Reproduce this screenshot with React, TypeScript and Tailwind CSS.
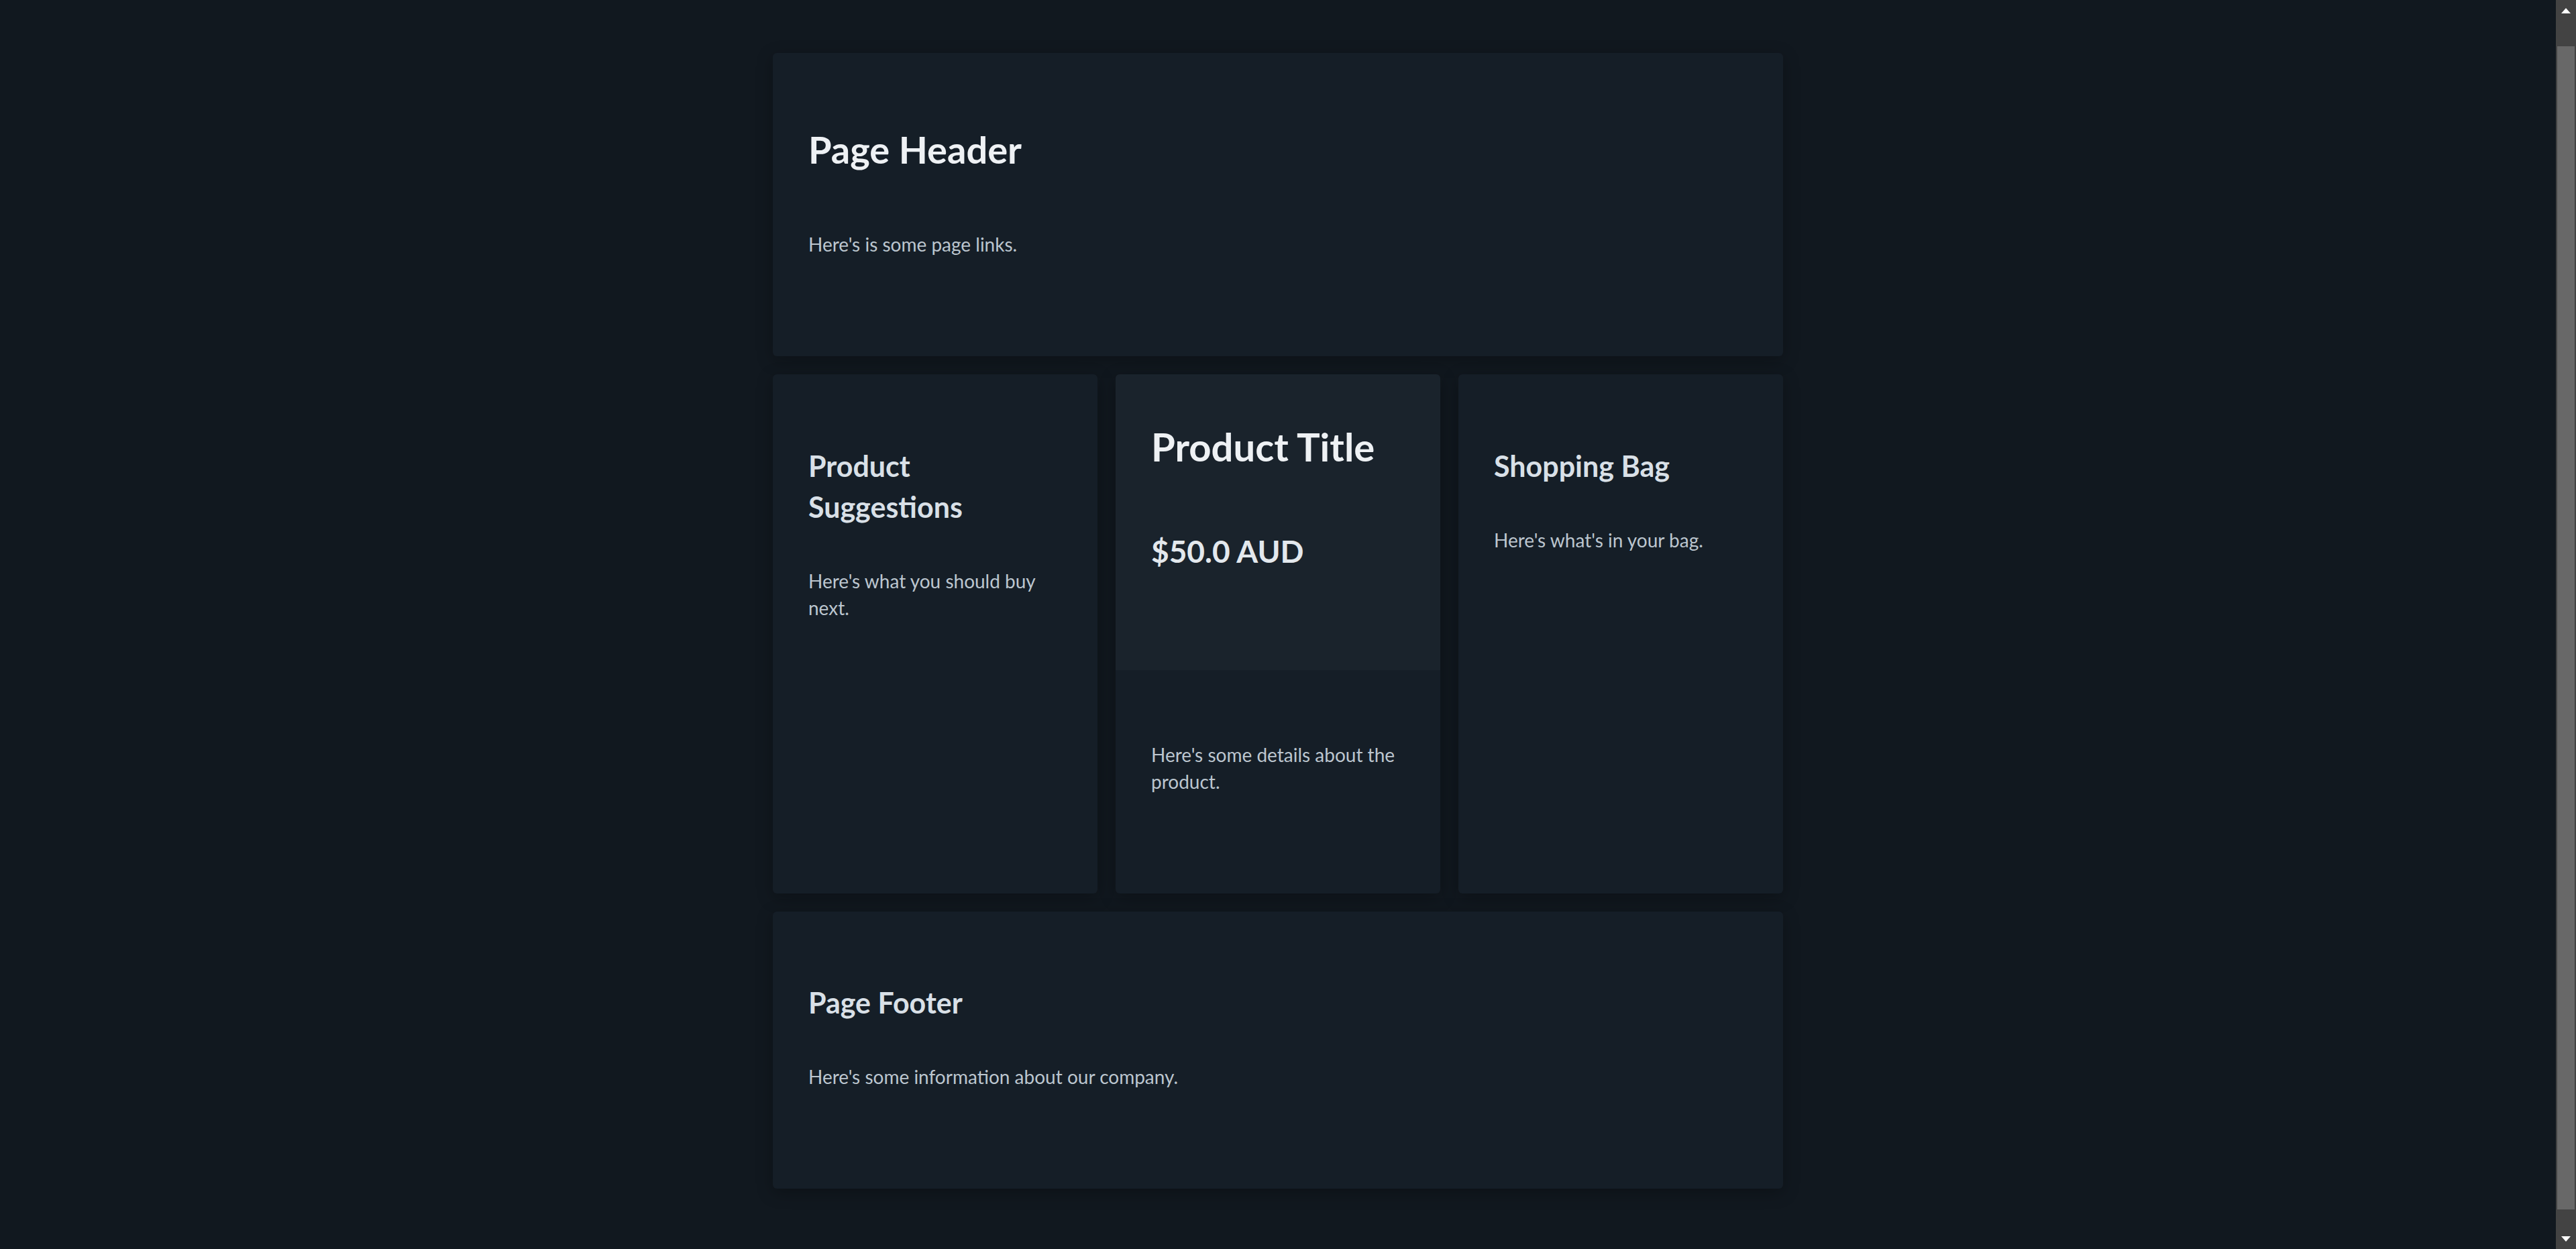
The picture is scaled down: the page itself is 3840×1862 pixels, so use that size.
import React from 'react';

// Tarjetas del layout de la página de producto
const cardClass = 'rounded-[6px] bg-[#151e27] shadow-[0_6px_24px_rgba(0,0,0,0.28)]';

const ScrollBar = () => (
  <div className="flex w-[30px] shrink-0 flex-col bg-[#434343]">
    <div className="flex h-[34px] items-center justify-center pb-[3px]">
      <svg width="14" height="8" viewBox="0 0 14 8">
        <polygon points="7,0 14,8 0,8" fill="#ffffff" />
      </svg>
    </div>
    <div className="flex-1 px-[2px] pt-[35px] pb-[25px]">
      <div className="h-full bg-[#686868]" />
    </div>
    <div className="flex h-[34px] items-center justify-center pt-[3px]">
      <svg width="14" height="8" viewBox="0 0 14 8">
        <polygon points="0,0 14,0 7,8" fill="#ffffff" />
      </svg>
    </div>
  </div>
);

const App = () => {
  return (
    <div className="flex h-screen overflow-hidden bg-[#11181f] font-['Lato','Open_Sans',sans-serif]">
      <main className="flex-1 overflow-hidden pt-[79px]">
        <div className="mx-auto flex w-[1506px] flex-col gap-[27px]">
          {/* Cabecera */}
          <header className={`${cardClass} h-[452px] px-[53px] pt-[112px]`}>
            <h1 className="text-[56px] font-bold leading-[64px] text-[#eef1f4]">Page Header</h1>
            <p className="mt-[92px] text-[28px] leading-[34px] text-[#bcc6cf]">Here's is some page links.</p>
          </header>

          {/* Fila central: sugerencias, producto y bolsa */}
          <div className="grid h-[774px] grid-cols-3 gap-[27px]">
            <section className={`${cardClass} px-[53px] pt-[106px]`}>
              <h2 className="text-[43px] font-bold leading-[61px] text-[#d9e0e7]">Product Suggestions</h2>
              <p className="mt-[60px] text-[28px] leading-[40px] text-[#bcc6cf]">Here's what you should buy next.</p>
            </section>

            <section className={`${cardClass} flex flex-col overflow-hidden`}>
              <div className="h-[441px] bg-[#1a232c] px-[53px] pt-[75px]">
                <h1 className="text-[58px] font-bold leading-[66px] text-[#eef1f4]">Product Title</h1>
                <h2 className="mt-[95px] text-[46px] font-bold leading-[56px] text-[#e3e8ed]">$50.0 AUD</h2>
              </div>
              <div className="px-[53px] pt-[106px]">
                <p className="text-[28px] leading-[40px] text-[#bcc6cf]">Here's some details about the product.</p>
              </div>
            </section>

            <section className={`${cardClass} px-[53px] pt-[106px]`}>
              <h2 className="text-[43px] font-bold leading-[61px] text-[#d9e0e7]">Shopping Bag</h2>
              <p className="mt-[60px] text-[28px] leading-[40px] text-[#bcc6cf]">Here's what's in your bag.</p>
            </section>
          </div>

          {/* Pie de página */}
          <footer className={`${cardClass} h-[413px] px-[53px] pt-[105px]`}>
            <h2 className="text-[43px] font-bold leading-[61px] text-[#d9e0e7]">Page Footer</h2>
            <p className="mt-[60px] text-[28px] leading-[40px] text-[#bcc6cf]">Here's some information about our company.</p>
          </footer>
        </div>
      </main>
      <ScrollBar />
    </div>
  );
};

export default App;
